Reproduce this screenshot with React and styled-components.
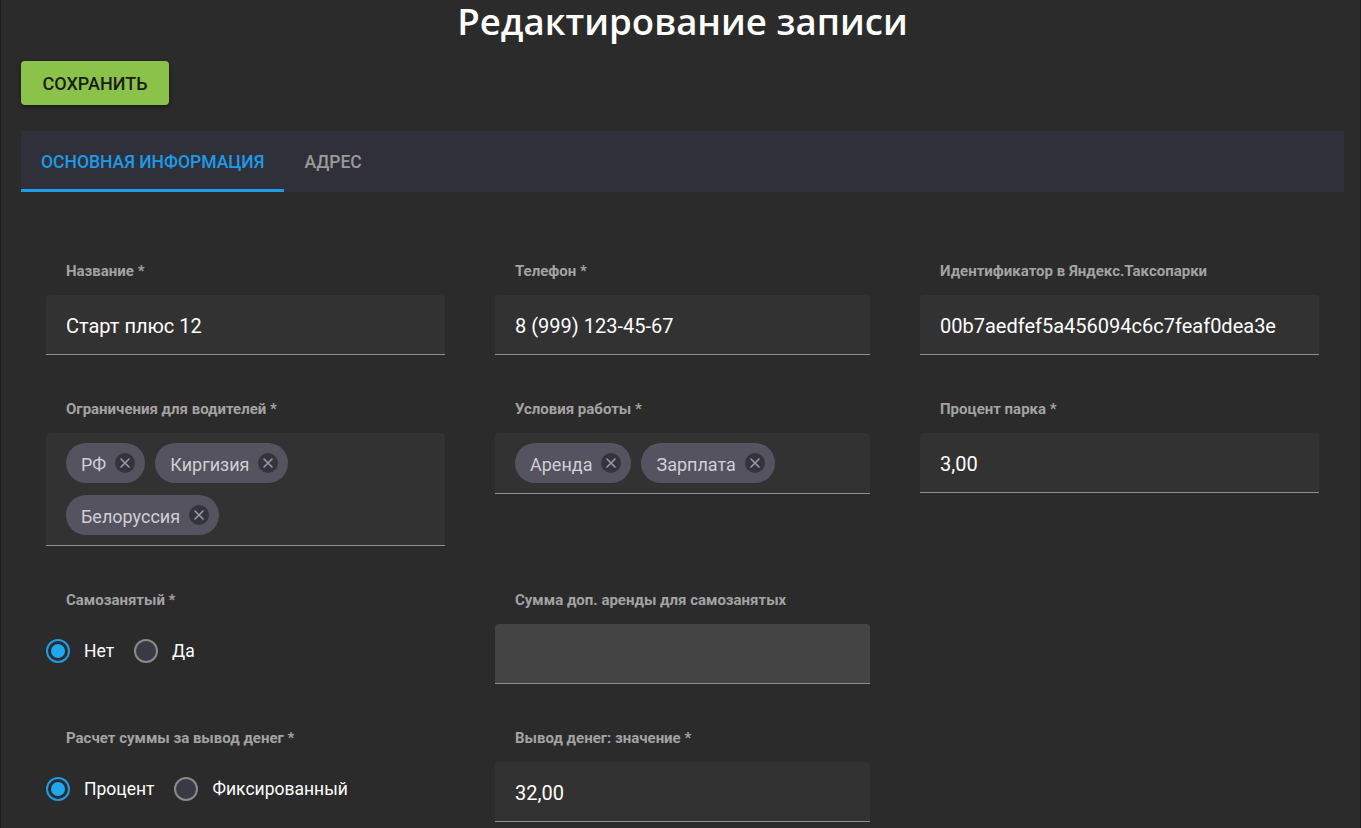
import React from 'react';
import styled, { createGlobalStyle } from 'styled-components';

const GlobalStyle = createGlobalStyle`
    html, body {
        margin: 0;
        background: #2b2b2b;
    }
    body {
        font-family: Roboto, "Noto Sans", sans-serif;
        color: #fff;
    }
`

const Page = styled.div`
    min-height: 828px;
    padding: 0 16px 0 20px;
    box-sizing: border-box;
    border-left: 1px solid #1d1d1d;
    border-right: 1px solid #1d1d1d;
`

const Title = styled.h1`
    margin: 0;
    height: 44px;
    text-align: center;
    font-family: "Open Sans", sans-serif;
    font-weight: 600;
    font-size: 36.6px;
    line-height: 42px;
    color: #fff;
`

const SaveButton = styled.button`
    display: block;
    margin: 17px 0 26px;
    width: 148px;
    height: 44px;
    padding: 0;
    border: none;
    border-radius: 4px;
    background: #8bc34a;
    color: #1b1b1b;
    font-family: Roboto, sans-serif;
    font-weight: 500;
    font-size: 18px;
    box-shadow: 0 2px 4px rgba(0, 0, 0, 0.45);
`

const TabBar = styled.div`
    display: flex;
    height: 61px;
    background: #2f303a;
`

const Tab = styled.div`
    display: flex;
    align-items: center;
    padding: 3px 20px 0;
    box-sizing: border-box;
    font-weight: 500;
    font-size: 17.5px;
    color: ${props => props.active ? '#1e9be6' : '#9a9a9a'};
    border-bottom: 3px solid ${props => props.active ? '#1e9be6' : 'transparent'};
`

const Form = styled.div`
    display: grid;
    grid-template-columns: 399px 375px 399px;
    column-gap: 50px;
    row-gap: 46px;
    padding: 71px 0 0 25px;
    align-items: start;
`

const Cell = styled.div`
    display: flex;
    flex-direction: column;
`

const Label = styled.div`
    margin: 0 0 16px 20px;
    height: 16px;
    line-height: 16px;
    font-weight: 700;
    font-size: 15px;
    color: #a3a3a3;
`

const Field = styled.div`
    display: flex;
    flex-wrap: wrap;
    align-items: center;
    gap: 12px 10px;
    min-height: 60px;
    padding: ${props => props.chips ? '10px 20px' : '2px 20px 0'};
    box-sizing: border-box;
    background: ${props => props.disabled ? '#444444' : '#323232'};
    border-radius: 4px 4px 0 0;
    border-bottom: 1px solid #8f8f8f;
    font-size: 20px;
    color: #fff;
`

const Chip = styled.div`
    display: flex;
    align-items: center;
    gap: 9px;
    height: 40px;
    padding: 2px 10px 0 15px;
    box-sizing: border-box;
    border-radius: 20px;
    background: #54535f;
    color: #cfcfd4;
    font-size: 18px;
`

const ChipRemove = styled.span`
    display: flex;
    width: 20px;
    height: 20px;
    margin-top: -2px;
    border-radius: 50%;
    background: #34343f;
    align-items: center;
    justify-content: center;
`

const RadioGroup = styled.div`
    display: flex;
    align-items: center;
    height: 60px;
    padding-bottom: 6px;
    box-sizing: border-box;
`

const RadioOption = styled.label`
    display: flex;
    align-items: center;
    gap: 14px;
    margin-right: 20px;
    font-size: 17.5px;
    color: #fff;
`

const RadioCircle = styled.span`
    display: flex;
    align-items: center;
    justify-content: center;
    width: 24px;
    height: 24px;
    box-sizing: border-box;
    border-radius: 50%;
    border: 2px solid ${props => props.checked ? '#1e9be6' : '#8a8a8a'};
    background: ${props => props.checked ? 'transparent' : '#3a3a46'};

    &::after {
        content: '';
        display: ${props => props.checked ? 'block' : 'none'};
        width: 14px;
        height: 14px;
        border-radius: 50%;
        background: #1ea8ef;
    }
`

const RemoveIcon = () => (
    <ChipRemove>
        <svg width="12" height="12" viewBox="0 0 12 12">
            <path d="M2 2 L10 10 M10 2 L2 10" stroke="#9a9aa5" strokeWidth="1.6" strokeLinecap="round" />
        </svg>
    </ChipRemove>
)

const Chips = ({ items }) => (
    <Field chips>
        {items.map(item => (
            <Chip key={item}>{item}<RemoveIcon /></Chip>
        ))}
    </Field>
)

const Radios = ({ options, value }) => (
    <RadioGroup>
        {options.map(opt => (
            <RadioOption key={opt}>
                <RadioCircle checked={opt === value} />
                {opt}
            </RadioOption>
        ))}
    </RadioGroup>
)

const App = () => (
    <>
        <GlobalStyle />
        <Page>
            <Title>Редактирование записи</Title>
            <SaveButton>СОХРАНИТЬ</SaveButton>
            <TabBar>
                <Tab active>ОСНОВНАЯ ИНФОРМАЦИЯ</Tab>
                <Tab>АДРЕС</Tab>
            </TabBar>
            <Form>
                <Cell>
                    <Label>Название *</Label>
                    <Field>Старт плюс 12</Field>
                </Cell>
                <Cell>
                    <Label>Телефон *</Label>
                    <Field>8 (999) 123-45-67</Field>
                </Cell>
                <Cell>
                    <Label>Идентификатор в Яндекс.Таксопарки</Label>
                    <Field>00b7aedfef5a456094c6c7feaf0dea3e</Field>
                </Cell>

                <Cell>
                    <Label>Ограничения для водителей *</Label>
                    <Chips items={['РФ', 'Киргизия', 'Белоруссия']} />
                </Cell>
                <Cell>
                    <Label>Условия работы *</Label>
                    <Chips items={['Аренда', 'Зарплата']} />
                </Cell>
                <Cell>
                    <Label>Процент парка *</Label>
                    <Field>3,00</Field>
                </Cell>

                <Cell>
                    <Label>Самозанятый *</Label>
                    <Radios options={['Нет', 'Да']} value="Нет" />
                </Cell>
                <Cell>
                    <Label>Сумма доп. аренды для самозанятых</Label>
                    <Field disabled />
                </Cell>
                <div />

                <Cell>
                    <Label>Расчет суммы за вывод денег *</Label>
                    <Radios options={['Процент', 'Фиксированный']} value="Процент" />
                </Cell>
                <Cell>
                    <Label>Вывод денег: значение *</Label>
                    <Field>32,00</Field>
                </Cell>
            </Form>
        </Page>
    </>
)

export default App
